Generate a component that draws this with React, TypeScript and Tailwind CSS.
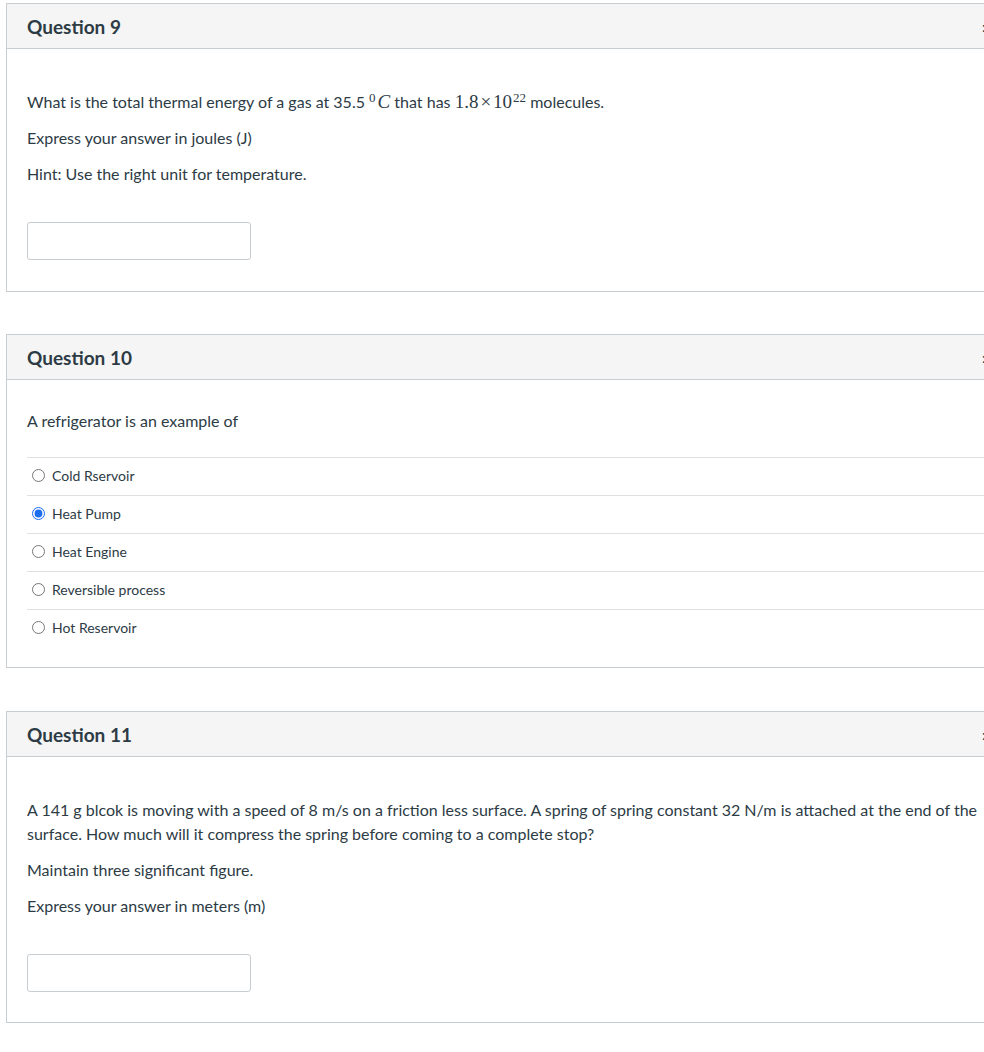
import React from "react";

const font = { fontFamily: "Lato, 'Noto Sans', sans-serif" };

function Header({ title }: { title: string }) {
  return (
    <div className="flex items-center h-[45px] bg-[#f5f5f5] border-b border-[#c7cdd1] px-[20px]">
      <h2 className="w-[955px] shrink-0 text-[19px] font-bold text-[#2d3b45] leading-none">{title}</h2>
      <span className="text-[14px] text-[#2d3b45] whitespace-nowrap">: pts</span>
    </div>
  );
}

function Card({ title, children }: { title: string; children: React.ReactNode }) {
  return (
    <div className="w-[1060px] ml-[6px] border border-[#c7cdd1] bg-white">
      <Header title={title} />
      {children}
    </div>
  );
}

function AnswerInput() {
  return <div className="w-[224px] h-[38px] border border-[#c7cdd1] rounded-[3px] bg-white" />;
}

const serif = "font-['Liberation_Serif',serif] text-[19px]";

export default function App() {
  const answers = ["Cold Rservoir", "Heat Pump", "Heat Engine", "Reversible process", "Hot Reservoir"];
  return (
    <div className="w-[984px] h-[1052px] overflow-hidden bg-white pt-[3px] text-[#2d3b45]" style={font}>
      <Card title="Question 9">
        <div className="pt-[41px] pb-[31px] px-[20px] text-[16px] leading-[24px]">
          <p className="mb-[12px]">
            What is the total thermal energy of a gas at 35.5{" "}
            <span className={serif}>
              <sup className="text-[13px] mr-[2px]">0</sup>
              <i>C</i>
            </span>{" "}
            that has{" "}
            <span className={serif}>
              1.8<span className="mx-[2px]">×</span>10<sup className="text-[13px] ml-[1px]">22</sup>
            </span>{" "}
            molecules.
          </p>
          <p className="mb-[12px]">Express your answer in joules (J)</p>
          <p className="mb-[36px]">Hint: Use the right unit for temperature.</p>
          <AnswerInput />
        </div>
      </Card>

      <div className="h-[42px]" />

      <Card title="Question 10">
        <div className="pt-[29px] pb-[20px] pl-[20px] text-[16px] leading-[24px]">
          <p className="mb-[24px]">A refrigerator is an example of</p>
          <div>
            {answers.map((a, i) => (
              <label key={a} className="flex items-center h-[38px] pb-[2px] border-t border-[#dde1e3] pl-[5px] text-[14px]">
                <input
                  type="radio"
                  name="q10"
                  defaultChecked={i === 1}
                  className="m-0 w-[13px] h-[13px] accent-[#1a6ef0]"
                />
                <span className="ml-[7px]">{a}</span>
              </label>
            ))}
          </div>
        </div>
      </Card>

      <div className="h-[43px]" />

      <Card title="Question 11">
        <div className="pt-[41px] pb-[30px] px-[20px] text-[16px] leading-[24px]">
          <p className="mb-[12px] w-[955px]">
            A 141 g blcok is moving with a speed of 8 m/s on a friction less surface. A spring of spring constant 32 N/m is attached at the end of the surface. How much will it compress the spring before coming to a complete stop?
          </p>
          <p className="mb-[12px]">Maintain three significant figure.</p>
          <p className="mb-[36px]">Express your answer in meters (m)</p>
          <AnswerInput />
        </div>
      </Card>
    </div>
  );
}
